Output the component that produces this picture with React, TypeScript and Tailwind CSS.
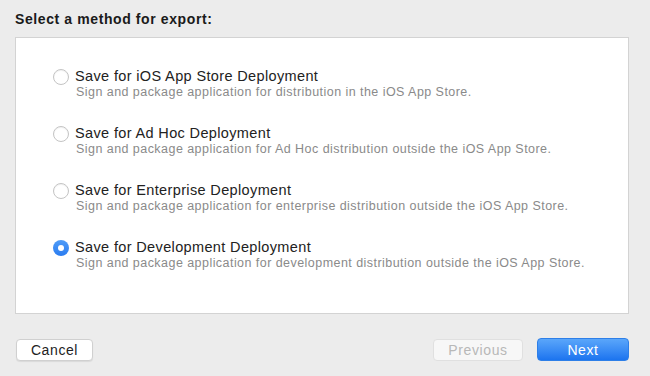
const options = [
  {
    title: "Save for iOS App Store Deployment",
    desc: "Sign and package application for distribution in the iOS App Store.",
  },
  {
    title: "Save for Ad Hoc Deployment",
    desc: "Sign and package application for Ad Hoc distribution outside the iOS App Store.",
  },
  {
    title: "Save for Enterprise Deployment",
    desc: "Sign and package application for enterprise distribution outside the iOS App Store.",
  },
  {
    title: "Save for Development Deployment",
    desc: "Sign and package application for development distribution outside the iOS App Store.",
  },
];

const Radio = ({ checked }: { checked: boolean }) =>
  checked ? (
    <div className="w-4 h-4 rounded-full bg-gradient-to-b from-[#4f9cf8] to-[#2a7cf0] flex items-center justify-center shrink-0">
      <div className="w-[6px] h-[6px] rounded-full bg-white" />
    </div>
  ) : (
    <div className="w-4 h-4 rounded-full bg-white border border-[#c4c4c4] shadow-[inset_0_1px_1px_rgba(0,0,0,0.06)] shrink-0" />
  );

export default function App() {
  return (
    <div
      className="w-[650px] h-[376px] bg-[#ececec] px-[15px] pt-[11px] flex flex-col"
      style={{ fontFamily: '"Liberation Sans", Arial, sans-serif' }}
    >
      <div className="text-[14px] font-bold text-[#1a1a1a] leading-[17px] tracking-[0.6px]">
        Select a method for export:
      </div>
      <div className="mt-[9px] h-[277px] w-[614px] bg-white border border-[#d3d3d3] pl-[37px] pt-[30px] flex flex-col gap-[25px]">
        {options.map((o, i) => (
          <div key={i} className="flex items-start">
            <div className="mt-[1px]">
              <Radio checked={i === 3} />
            </div>
            <div className="ml-[6px] flex flex-col">
              <div className="text-[14.5px] leading-[17px] text-[#222] tracking-[0.36px]">{o.title}</div>
              <div className="text-[12.5px] leading-[15px] text-[#8a8a8a] ml-[1px] tracking-[0.45px]">{o.desc}</div>
            </div>
          </div>
        ))}
      </div>
      <div className="mt-[24px] mr-[6px] flex items-center">
        <button className="ml-[1px] w-[77px] h-[22px] bg-white rounded-[4px] border border-[#d0d0d0] shadow-[0_1px_1px_rgba(0,0,0,0.08)] text-[14px] text-[#222] leading-none tracking-[0.6px]">
          Cancel
        </button>
        <div className="flex-1" />
        <button className="w-[90px] h-[22px] bg-[#f7f7f7] rounded-[4px] border border-[#e0e0e0] text-[14px] text-[#b8b8b8] leading-none tracking-[0.6px]">
          Previous
        </button>
        <button className="ml-[14px] w-[92px] h-[23px] rounded-[4px] bg-gradient-to-b from-[#5aa6fa] to-[#1b74ef] border border-[#2d7fe8] text-[14px] text-white leading-none tracking-[0.6px]">
          Next
        </button>
      </div>
    </div>
  );
}
